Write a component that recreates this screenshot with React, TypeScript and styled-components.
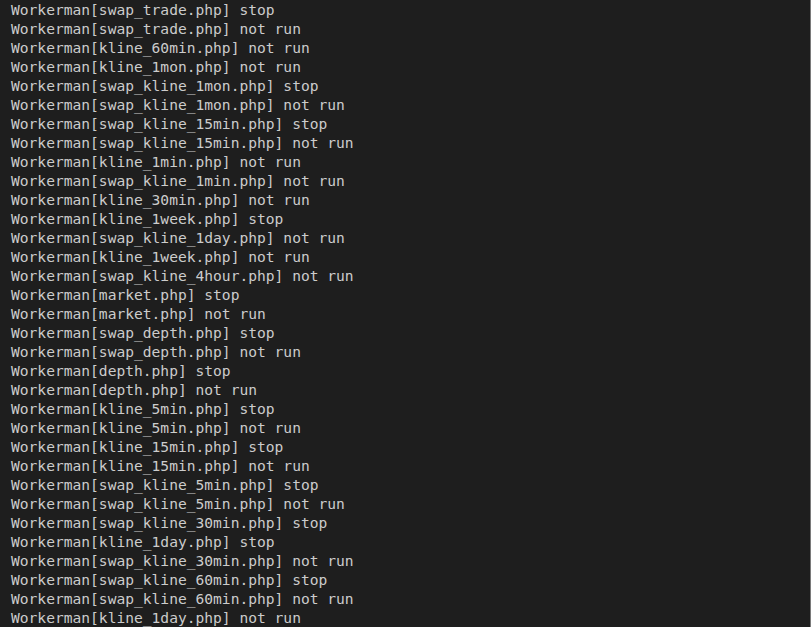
import React from "react";
import styled, { createGlobalStyle } from "styled-components";

const Global = createGlobalStyle`
  html, body { margin: 0; padding: 0; background: #1e1e1e; }
  body { width: 811px; height: 627px; overflow: hidden; }
`;

const Terminal = styled.div`
  box-sizing: border-box;
  width: 811px;
  height: 627px;
  background: #1e1e1e;
  border-right: 1px solid #7a7a7a;
  padding: 0 0 0 11px;
  overflow: hidden;
`;

const Line = styled.div`
  font-family: "DejaVu Sans Mono", "Liberation Mono", monospace;
  font-size: 14.6px;
  line-height: 19px;
  height: 19px;
  color: #cccccc;
  white-space: pre;
`;

const lines = [
  "Workerman[swap_trade.php] stop",
  "Workerman[swap_trade.php] not run",
  "Workerman[kline_60min.php] not run",
  "Workerman[kline_1mon.php] not run",
  "Workerman[swap_kline_1mon.php] stop",
  "Workerman[swap_kline_1mon.php] not run",
  "Workerman[swap_kline_15min.php] stop",
  "Workerman[swap_kline_15min.php] not run",
  "Workerman[kline_1min.php] not run",
  "Workerman[swap_kline_1min.php] not run",
  "Workerman[kline_30min.php] not run",
  "Workerman[kline_1week.php] stop",
  "Workerman[swap_kline_1day.php] not run",
  "Workerman[kline_1week.php] not run",
  "Workerman[swap_kline_4hour.php] not run",
  "Workerman[market.php] stop",
  "Workerman[market.php] not run",
  "Workerman[swap_depth.php] stop",
  "Workerman[swap_depth.php] not run",
  "Workerman[depth.php] stop",
  "Workerman[depth.php] not run",
  "Workerman[kline_5min.php] stop",
  "Workerman[kline_5min.php] not run",
  "Workerman[kline_15min.php] stop",
  "Workerman[kline_15min.php] not run",
  "Workerman[swap_kline_5min.php] stop",
  "Workerman[swap_kline_5min.php] not run",
  "Workerman[swap_kline_30min.php] stop",
  "Workerman[kline_1day.php] stop",
  "Workerman[swap_kline_30min.php] not run",
  "Workerman[swap_kline_60min.php] stop",
  "Workerman[swap_kline_60min.php] not run",
  "Workerman[kline_1day.php] not run",
];

export default function App() {
  return (
    <>
      <Global />
      <Terminal>
        {lines.map((l, i) => (
          <Line key={i}>{l}</Line>
        ))}
      </Terminal>
    </>
  );
}
